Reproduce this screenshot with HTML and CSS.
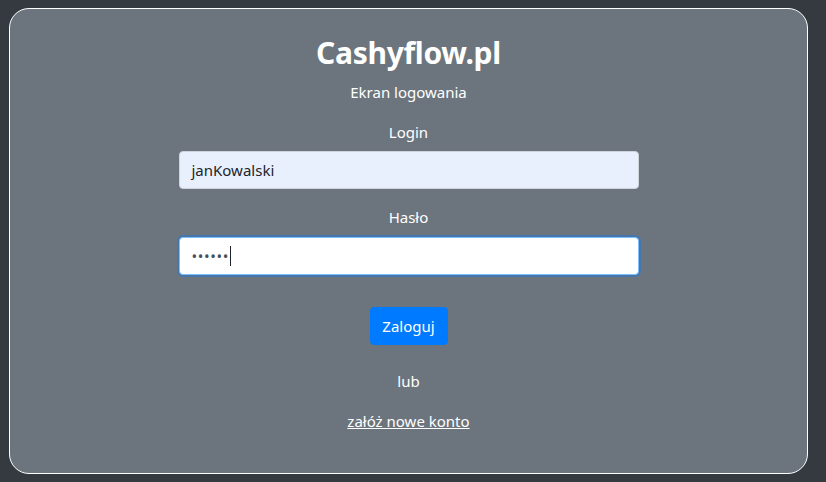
FILE: index.html
```html
<!DOCTYPE html>
<html lang="pl">
<head>
<meta charset="utf-8">
<title>Cashyflow.pl</title>
<link rel="stylesheet" href="styles.css">
</head>
<body>
<main class="card">
  <h1 class="title">Cashyflow.pl</h1>
  <p class="subtitle">Ekran logowania</p>
  <form class="form">
    <label class="label" for="login">Login</label>
    <div class="field autofill">janKowalski</div>
    <label class="label label-gap" for="pass">Hasło</label>
    <div class="field focused"><span class="dots">••••••</span><span class="caret"></span></div>
    <button type="button" class="btn">Zaloguj</button>
  </form>
  <p class="or">lub</p>
  <a class="link" href="#">załóż nowe konto</a>
</main>
</body>
</html>
```
FILE: styles.css
```css
* { box-sizing: border-box; }
html, body { height: 100%; }
body {
  margin: 0;
  background: #343a40;
  font-family: "Noto Sans", "Open Sans", sans-serif;
  font-size: 16px;
  line-height: 24px;
  color: #fff;
  padding: 8px 18px 9px 9px;
}
.card {
  height: 466px;
  background: #6c757d;
  border: 1px solid #fff;
  border-radius: 20px;
  display: flex;
  flex-direction: column;
  align-items: center;
  padding-top: 25px;
}
.title {
  margin: 0 0 8px;
  font-size: 30px;
  line-height: 38px;
  font-weight: 700;
  letter-spacing: -0.3px;
}
.subtitle {
  margin: 0 0 16px;
  font-size: 15px;
}
.form {
  display: flex;
  flex-direction: column;
  align-items: center;
  width: 460px;
}
.label {
  display: block;
  font-size: 15px;
  margin-bottom: 7px;
}
.label-gap { margin-top: 16px; margin-bottom: 8px; }
.field {
  width: 460px;
  height: 38px;
  border: 1px solid #ced4da;
  border-radius: 4px;
  padding: 6px 12px;
  color: #212529;
  font-size: 15px;
  display: flex;
  align-items: center;
}
.autofill { background: #e8f0fe; }
.focused {
  background: #fff;
  border-color: #80bdff;
  box-shadow: 0 0 0 2px rgba(0, 123, 255, 0.35);
}
.dots { color: #495057; font-size: 15px; letter-spacing: 0.6px; }
.caret {
  width: 1px;
  height: 20px;
  background: #212529;
  margin-left: 1px;
}
.btn {
  margin-top: 32px;
  width: 78px;
  height: 38px;
  border: 1px solid #007bff;
  border-radius: 4px;
  background: #007bff;
  color: #fff;
  font-family: inherit;
  font-size: 15px;
  padding: 0;
}
.or {
  margin: 24px 0 16px;
  font-size: 15px;
}
.link {
  color: #fff;
  text-decoration: underline;
  font-size: 15px;
}
```
